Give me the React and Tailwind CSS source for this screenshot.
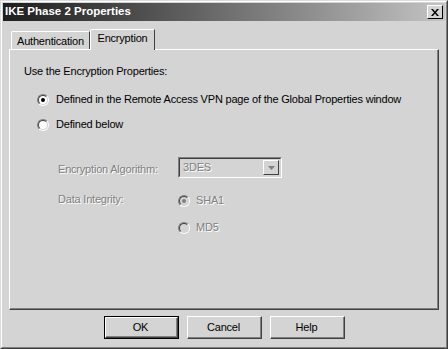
import React from "react";

const Radio = ({ checked, disabled }) => (
  <span className="inline-block w-[12px] h-[12px] rounded-full border border-t-[#808080] border-l-[#808080] border-r-white border-b-white shrink-0">
    <span
      className={
        "flex items-center justify-center w-full h-full rounded-full border border-t-[#404040] border-l-[#404040] border-r-[#d4d4d4] border-b-[#d4d4d4] " +
        (disabled ? "bg-[#d4d4d4]" : "bg-white")
      }
    >
      {checked && (
        <span
          className={
            "block w-[4px] h-[4px] rounded-full " +
            (disabled ? "bg-[#808080]" : "bg-black")
          }
        />
      )}
    </span>
  </span>
);

const Button = ({ label, isDefault }) => (
  <div
    className={
      "w-[75px] h-[23px] " +
      (isDefault ? "border border-black" : "")
    }
  >
    <div className="w-full h-full border border-t-white border-l-white border-r-[#404040] border-b-[#404040]">
      <div className="w-full h-full flex items-center justify-center border-r border-b border-[#808080] text-black">
        {label}
      </div>
    </div>
  </div>
);

const dim = "text-[#808080] [text-shadow:1px_1px_0_#fff]";

export default function App() {
  return (
    <div className="w-[448px] h-[349px] bg-[#d4d4d4] border border-t-[#dcdcdc] border-l-[#dcdcdc] border-r-[#404040] border-b-[#404040] font-['Liberation_Sans',Arial,sans-serif] text-[11px] tracking-[-0.2px] text-black whitespace-nowrap">
      <div className="w-full h-full border border-t-white border-l-white border-r-[#808080] border-b-[#808080] p-px flex flex-col">
        {/* title bar */}
        <div className="h-[18px] flex items-center justify-between pl-[2px] pr-[2px] bg-gradient-to-r from-[#1e1e1e] via-[#6e6e6e] to-[#c4c4c4]">
          <span className="text-white font-bold text-[11.5px] tracking-normal leading-none">IKE Phase 2 Properties</span>
          <div className="w-[16px] h-[14px] border border-t-white border-l-white border-r-black border-b-black bg-[#d4d4d4] flex items-center justify-center">
            <svg width="8" height="7" viewBox="0 0 8 7">
              <path d="M0 0h2l2 2.5L6 0h2L5 3.5 8 7H6L4 4.5 2 7H0l3-3.5z" fill="#000" />
            </svg>
          </div>
        </div>

        {/* tabs + panel */}
        <div className="px-[6px] pt-[8px] flex flex-col">
          <div className="flex items-end pl-[2px] h-[20px] relative z-10">
            <div className="w-[79px] h-[18px] border-t border-l border-white border-r border-r-[#404040] rounded-tl-[2px] flex items-center justify-center pt-px">
              Authentication
            </div>
            <div className="w-[65px] h-[21px] -mb-[1px] bg-[#d4d4d4] border-t border-l border-white border-r border-r-[#404040] rounded-tl-[2px] flex items-center justify-center pb-[3px]">
              Encryption
            </div>
          </div>
          <div className="h-[261px] border border-t-white border-l-white border-r-[#404040] border-b-[#404040]">
            <div className="h-full border-r border-b border-[#808080] pl-[14px] pt-[15px]">
              <div className="h-[13px] leading-[13px]">Use the Encryption Properties:</div>

              <div className="mt-[15px] h-[13px] flex items-center pl-[13px] gap-[7px]">
                <Radio checked />
                <span>Defined in the Remote Access VPN page of the Global Properties window</span>
              </div>
              <div className="mt-[12px] h-[13px] flex items-center pl-[13px] gap-[7px]">
                <Radio />
                <span>Defined below</span>
              </div>

              <div className="mt-[26px] pl-[34px] flex">
                <div className={"w-[120px] h-[21px] flex items-center pt-[3px] " + dim}>Encryption Algorithm:</div>
                <div className="w-[104px] h-[21px] border border-t-[#808080] border-l-[#808080] border-r-white border-b-white">
                  <div className="w-full h-full border border-t-[#404040] border-l-[#404040] border-r-[#d4d4d4] border-b-[#d4d4d4] flex items-center justify-between pl-[3px] pr-px">
                    <span className={dim}>3DES</span>
                    <div className="w-[16px] h-[15px] border border-t-white border-l-white border-r-[#404040] border-b-[#404040] flex items-center justify-center">
                      <svg width="7" height="4" viewBox="0 0 7 4">
                        <path d="M0 0h7L3.5 4z" fill="#808080" />
                      </svg>
                    </div>
                  </div>
                </div>
              </div>

              <div className="mt-[16px] pl-[34px] flex">
                <div className={"w-[120px] h-[13px] leading-[13px] -mt-[1px] " + dim}>Data Integrity:</div>
                <div className="flex flex-col gap-[14px]">
                  <div className="h-[13px] flex items-center gap-[6px]">
                    <Radio checked disabled />
                    <span className={dim}>SHA1</span>
                  </div>
                  <div className="h-[13px] flex items-center gap-[6px]">
                    <Radio disabled />
                    <span className={dim}>MD5</span>
                  </div>
                </div>
              </div>
            </div>
          </div>
        </div>

        {/* buttons */}
        <div className="flex justify-center gap-[8px] mt-[6px]">
          <Button label="OK" isDefault />
          <Button label="Cancel" />
          <Button label="Help" />
        </div>
      </div>
    </div>
  );
}
